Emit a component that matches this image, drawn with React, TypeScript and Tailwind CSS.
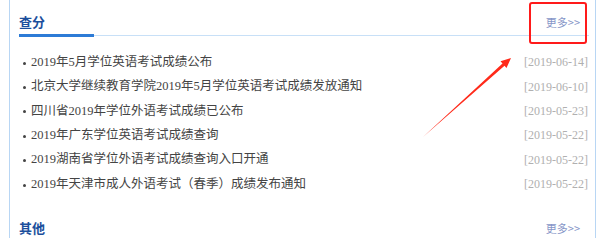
import React from "react";

const items = [
  { t: "2019年5月学位英语考试成绩公布", d: "2019-06-14" },
  { t: "北京大学继续教育学院2019年5月学位英语考试成绩发放通知", d: "2019-06-10" },
  { t: "四川省2019年学位外语考试成绩已公布", d: "2019-05-23" },
  { t: "2019年广东学位英语考试成绩查询", d: "2019-05-22" },
  { t: "2019湖南省学位外语考试成绩查询入口开通", d: "2019-05-22" },
  { t: "2019年天津市成人外语考试（春季）成绩发布通知", d: "2019-05-22" },
];

function Header({ title }: { title: string }) {
  return (
    <div className="flex items-start justify-between border-b border-[#c8e0f7]">
      <div className="-mb-[2px] border-b-[3px] border-[#2d7bd6] w-[75px] pb-[2px] text-[13px] leading-[20px] font-bold text-[#1c4f9c] [font-family:'Noto_Sans_CJK_SC',sans-serif]">
        {title}
      </div>
      <div className="pr-[9px] text-[11px] leading-[20px] text-[#8796c8] [font-family:'Noto_Sans_CJK_SC',sans-serif]">
        更多&gt;&gt;
      </div>
    </div>
  );
}

export default function App() {
  return (
    <div className="relative w-[600px] h-[238px] overflow-hidden bg-white">
      <div className="ml-[9px] w-[587px] h-full border-l border-r border-[#b8d6f4] pl-[9px] pr-[6px] pt-[12px]">
        <Header title="查分" />
        <ul className="mt-[14px]">
          {items.map((it) => (
            <li
              key={it.t}
              className="flex items-center justify-between h-[24.4px] [font-family:'Liberation_Serif','Noto_Sans_CJK_SC',serif]"
            >
              <div className="flex items-center">
                <span className="ml-[4px] mt-[2px] w-[3px] h-[3px] rounded-full bg-[#444]" />
                <span className="ml-[5px] text-[12.5px] text-[#444]">{it.t}</span>
              </div>
              <span className="pr-[1px] text-[12px] text-[#b0b0b0]">[{it.d}]</span>
            </li>
          ))}
        </ul>
        <div className="mt-[22px]">
          <Header title="其他" />
        </div>
      </div>

      <div className="absolute left-[529px] top-[2px] w-[58px] h-[42px] border-2 border-[#ff1a1a] rounded-[3px]" />
      <svg className="absolute left-0 top-0" width="600" height="238" viewBox="0 0 600 238">
        <polygon
          points="423,137 502.5,63.6 500.5,61.3 511,58 506.5,68 504.5,65.8"
          fill="#ff2a1a"
        />
      </svg>
    </div>
  );
}
